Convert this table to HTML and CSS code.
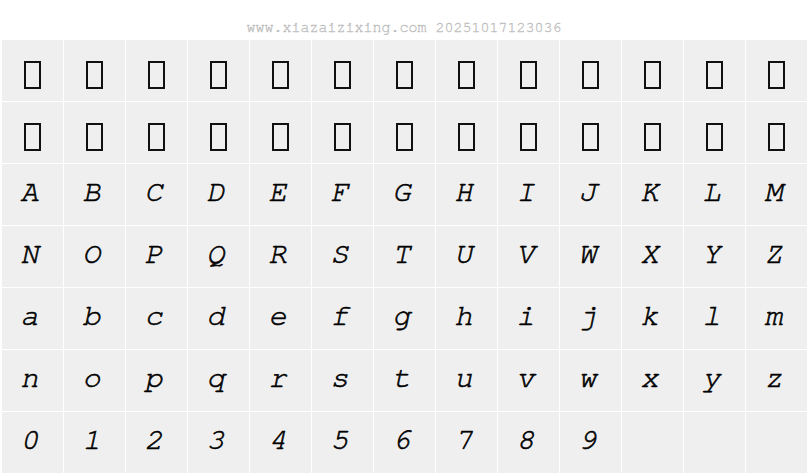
FILE: index.html
```html
<!DOCTYPE html>
<html>
<head>
<meta charset="utf-8">
<link rel="stylesheet" href="styles.css">
</head>
<body>
<div class="header">www.xiazaizixing.com 20251017123036</div>
<div class="grid">
<div class="cell"><span class="tofu"></span></div><div class="cell"><span class="tofu"></span></div><div class="cell"><span class="tofu"></span></div><div class="cell"><span class="tofu"></span></div><div class="cell"><span class="tofu"></span></div><div class="cell"><span class="tofu"></span></div><div class="cell"><span class="tofu"></span></div><div class="cell"><span class="tofu"></span></div><div class="cell"><span class="tofu"></span></div><div class="cell"><span class="tofu"></span></div><div class="cell"><span class="tofu"></span></div><div class="cell"><span class="tofu"></span></div><div class="cell"><span class="tofu"></span></div>
<div class="cell"><span class="tofu"></span></div><div class="cell"><span class="tofu"></span></div><div class="cell"><span class="tofu"></span></div><div class="cell"><span class="tofu"></span></div><div class="cell"><span class="tofu"></span></div><div class="cell"><span class="tofu"></span></div><div class="cell"><span class="tofu"></span></div><div class="cell"><span class="tofu"></span></div><div class="cell"><span class="tofu"></span></div><div class="cell"><span class="tofu"></span></div><div class="cell"><span class="tofu"></span></div><div class="cell"><span class="tofu"></span></div><div class="cell"><span class="tofu"></span></div>
<div class="cell">A</div><div class="cell">B</div><div class="cell">C</div><div class="cell">D</div><div class="cell">E</div><div class="cell">F</div><div class="cell">G</div><div class="cell">H</div><div class="cell">I</div><div class="cell">J</div><div class="cell">K</div><div class="cell">L</div><div class="cell">M</div>
<div class="cell">N</div><div class="cell">O</div><div class="cell">P</div><div class="cell">Q</div><div class="cell">R</div><div class="cell">S</div><div class="cell">T</div><div class="cell">U</div><div class="cell">V</div><div class="cell">W</div><div class="cell">X</div><div class="cell">Y</div><div class="cell">Z</div>
<div class="cell">a</div><div class="cell">b</div><div class="cell">c</div><div class="cell">d</div><div class="cell">e</div><div class="cell">f</div><div class="cell">g</div><div class="cell">h</div><div class="cell">i</div><div class="cell">j</div><div class="cell">k</div><div class="cell">l</div><div class="cell">m</div>
<div class="cell">n</div><div class="cell">o</div><div class="cell">p</div><div class="cell">q</div><div class="cell">r</div><div class="cell">s</div><div class="cell">t</div><div class="cell">u</div><div class="cell">v</div><div class="cell">w</div><div class="cell">x</div><div class="cell">y</div><div class="cell">z</div>
<div class="cell">0</div><div class="cell">1</div><div class="cell">2</div><div class="cell">3</div><div class="cell">4</div><div class="cell">5</div><div class="cell">6</div><div class="cell">7</div><div class="cell">8</div><div class="cell">9</div><div class="cell"></div><div class="cell"></div><div class="cell"></div>
</div>
</body>
</html>
```
FILE: styles.css
```css
html, body {
  margin: 0;
  padding: 0;
  background: #ffffff;
}
.header {
  height: 40px;
  box-sizing: border-box;
  padding-top: 19px;
  text-align: center;
  font-family: "TeX Gyre Cursor", "FreeMono", "Liberation Mono", monospace;
  font-size: 15px;
  line-height: 17px;
  color: #bcbcbc;
  -webkit-text-stroke: 0.3px #bcbcbc;
}
.grid {
  display: grid;
  grid-template-columns: repeat(13, 61px);
  grid-auto-rows: 61px;
  gap: 1px;
  margin-left: 2px;
}
.cell {
  background: #efefef;
  display: flex;
  align-items: center;
  justify-content: center;
  box-sizing: border-box;
  padding: 0 6px 7px 0;
  font-family: "TeX Gyre Cursor", "FreeMono", "Liberation Mono", monospace;
  font-style: italic;
  font-size: 30px;
  line-height: 1;
  color: #000;
  -webkit-text-stroke: 0.6px #000;
}
.tofu {
  display: block;
  width: 17px;
  height: 28px;
  box-sizing: border-box;
  border: 2px solid #111;
  margin: 16px 0 0 6px;
}
```
